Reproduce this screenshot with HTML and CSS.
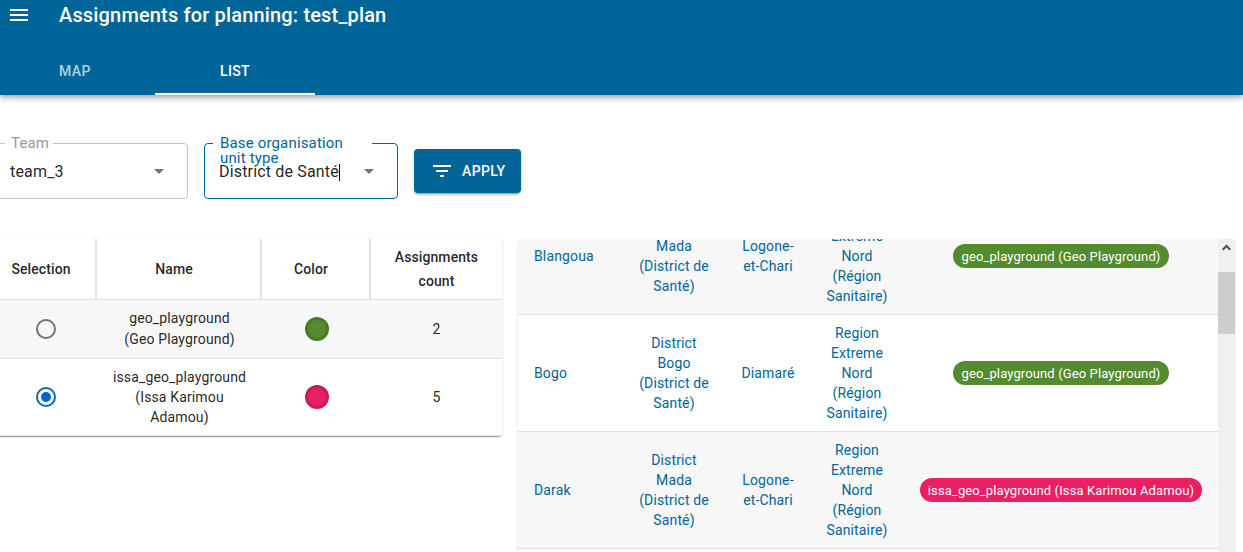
FILE: index.html
```html
<!DOCTYPE html>
<html lang="en">
<head>
<meta charset="utf-8">
<title>Assignments for planning: test_plan</title>
<link rel="stylesheet" href="styles.css">
</head>
<body>
<header class="app-bar">
  <div class="toolbar">
    <svg class="menu-icon" viewBox="0 0 24 24"><path d="M3 18h18v-2H3v2zm0-5h18v-2H3v2zm0-7v2h18V6H3z"/></svg>
    <h1 class="title">Assignments for planning: test_plan</h1>
  </div>
  <nav class="tabs">
    <div class="tab">MAP</div>
    <div class="tab tab-active">LIST</div>
  </nav>
</header>
<main class="content">
  <section class="filters">
    <div class="field field-team">
      <fieldset class="outline"><legend class="notch"></legend></fieldset>
      <span class="label">Team</span>
      <span class="value">team_3</span>
      <svg class="arrow" viewBox="0 0 24 24"><path d="M7 10l5 5 5-5z"/></svg>
    </div>
    <div class="field field-type">
      <fieldset class="outline"><legend class="notch"></legend></fieldset>
      <span class="label">Base organisation<br>unit type</span>
      <span class="value">District de Santé<i class="caret"></i></span>
      <svg class="arrow" viewBox="0 0 24 24"><path d="M7 10l5 5 5-5z"/></svg>
    </div>
    <button class="apply"><svg class="filter-icon" viewBox="0 0 24 24"><path d="M10 18h4v-2h-4v2zM3 6v2h18V6H3zm3 7h12v-2H6v2z"/></svg><span>APPLY</span></button>
  </section>
  <section class="panels">
    <div class="paper teams">
      <div class="team-row team-head">
        <div>Selection</div><div>Name</div><div>Color</div><div>Assignments<br>count</div>
      </div>
      <div class="team-row team-first">
        <div><span class="radio"></span></div>
        <div>geo_playground<br>(Geo Playground)</div>
        <div><span class="dot green"></span></div>
        <div>2</div>
      </div>
      <div class="team-row team-second">
        <div><span class="radio radio-on"></span></div>
        <div>issa_geo_playground<br>(Issa Karimou<br>Adamou)</div>
        <div><span class="dot pink"></span></div>
        <div>5</div>
      </div>
    </div>
    <div class="paper units">
      <div class="unit-list">
        <div class="unit-row">
          <div>Blangoua</div>
          <div>District<br>Mada<br>(District de<br>Santé)</div>
          <div>Logone-<br>et-Chari</div>
          <div>Region<br>Extreme<br>Nord<br>(Région<br>Sanitaire)</div>
          <div><span class="chip green">geo_playground (Geo Playground)</span></div>
        </div>
        <div class="unit-row">
          <div>Bogo</div>
          <div>District<br>Bogo<br>(District de<br>Santé)</div>
          <div>Diamaré</div>
          <div>Region<br>Extreme<br>Nord<br>(Région<br>Sanitaire)</div>
          <div><span class="chip green">geo_playground (Geo Playground)</span></div>
        </div>
        <div class="unit-row">
          <div>Darak</div>
          <div>District<br>Mada<br>(District de<br>Santé)</div>
          <div>Logone-<br>et-Chari</div>
          <div>Region<br>Extreme<br>Nord<br>(Région<br>Sanitaire)</div>
          <div><span class="chip pink">issa_geo_playground (Issa Karimou Adamou)</span></div>
        </div>
      </div>
      <div class="scrollbar">
        <svg class="scroll-up" viewBox="0 0 17 17"><path d="M4.7 10.7L8.5 6.9l3.8 3.8" fill="none" stroke="#505050" stroke-width="2.1"/></svg>
        <div class="thumb"></div>
      </div>
    </div>
  </section>
</main>
</body>
</html>
```
FILE: styles.css
```css
* { box-sizing: border-box; }
body {
  margin: 0;
  height: 552px;
  overflow: hidden;
  display: flex;
  flex-direction: column;
  background: #fff;
  color: rgba(0, 0, 0, .87);
  font-family: Roboto, "Liberation Sans", sans-serif;
  font-size: 14px;
  line-height: 20px;
  letter-spacing: .14px;
}

.app-bar {
  height: 95px;
  flex: none;
  background: #006699;
  color: #fff;
  box-shadow: 0 2px 4px -1px rgba(0,0,0,.2), 0 4px 5px 0 rgba(0,0,0,.14), 0 1px 10px 0 rgba(0,0,0,.12);
}
.toolbar {
  height: 47px;
  padding-left: 7px;
  display: flex;
  align-items: flex-start;
  gap: 28px;
}
.menu-icon { width: 24px; height: 24px; margin-top: 3px; fill: #fff; }
.title { margin: 0; font-size: 20px; font-weight: 500; line-height: 30px; letter-spacing: .16px; }
.tabs { display: flex; height: 48px; margin-left: -5px; }
.tab {
  width: 160px;
  text-align: center;
  font-weight: 500;
  line-height: 48px;
  letter-spacing: .4px;
  color: rgba(255, 255, 255, .7);
}
.tab-active { color: #fff; border-bottom: 2px solid #fff; }

.content { padding-top: 48px; }
.filters { display: flex; align-items: center; gap: 16px; margin-left: -4px; height: 56px; }
.field {
  position: relative;
  height: 56px;
  padding: 0 17px 0 14px;
  display: flex;
  align-items: center;
  justify-content: space-between;
  font-size: 16px;
}
.field-team { width: 192px; color: rgba(0, 0, 0, .87); }
.field-type { width: 194px; padding-left: 15px; }
.outline {
  position: absolute;
  inset: 0;
  margin: 0;
  padding: 0 0 0 8px;
  border: 1px solid #c4c4c4;
  border-radius: 4px;
}
.field-type .outline { border-color: #006699; }
.notch { height: 1px; padding: 0; width: 48px; }
.field-type .notch { width: 159px; }
.label {
  position: absolute;
  left: 15px;
  top: -7px;
  font-size: 15px;
  line-height: 15px;
  letter-spacing: .16px;
  color: #999;
}
.field-type .label { left: 16px; color: #006699; }
.value { padding-top: 2px; letter-spacing: .17px; }
.caret { display: inline-block; width: 1px; height: 17px; background: #000; vertical-align: -4px; }
.arrow { width: 24px; height: 24px; fill: #757575; }
.apply {
  width: 107px;
  height: 44px;
  padding: 0 16px;
  border: 0;
  border-radius: 4px;
  display: flex;
  align-items: center;
  gap: 8px;
  background: #006699;
  color: #fff;
  font: 500 14px/24px Roboto, sans-serif;
  letter-spacing: .4px;
  box-shadow: 0 3px 1px -2px rgba(0,0,0,.2), 0 2px 2px 0 rgba(0,0,0,.14), 0 1px 5px 0 rgba(0,0,0,.12);
}
.filter-icon { width: 24px; height: 24px; fill: #fff; flex: none; }

.panels { display: flex; gap: 16px; align-items: flex-start; margin: 40px 0 0 -4px; }
.paper {
  border-radius: 4px;
  overflow: hidden;
  background: #fff;
  box-shadow: 0 2px 1px -1px rgba(0,0,0,.2), 0 1px 1px 0 rgba(0,0,0,.14), 0 1px 3px 0 rgba(0,0,0,.12);
}
.teams { width: 506px; height: 197px; }
.team-row {
  display: grid;
  grid-template-columns: 101px 165px 109px 131px;
  border-bottom: 1px solid #e0e0e0;
  text-align: center;
}
.team-row > div { display: flex; align-items: center; justify-content: center; }
.team-row > div:first-child { padding-right: 1px; }
.team-head { height: 61px; font-weight: 500; line-height: 24px; letter-spacing: .09px; }
.team-head > div, .team-head > div:first-child { border-right: 2px solid #e0e0e0; padding-right: 9px; }
.team-head > div:last-child { border: 0; padding: 0; }
.team-first { height: 59px; line-height: 21px; background: #f7f7f7; }
.team-second { height: 77px; }
.radio { width: 20px; height: 20px; border: 2px solid #737373; border-radius: 50%; }
.radio-on { border-color: #0066cc; padding: 3px; background: #0066cc content-box; }
.dot { width: 24px; height: 24px; border: 3px solid rgba(0, 0, 0, .12); border-radius: 50%; }
.green { background-color: #558b2f; }
.pink { background-color: #e91e63; }

.units { width: 717px; height: 340px; display: flex; }
.unit-list { width: 700px; margin-top: -41px; }
.unit-row {
  height: 117px;
  display: grid;
  grid-template-columns: 104px 104px 84px 94px 314px;
  align-items: center;
  text-align: center;
  color: #006699;
  border-bottom: 1px solid #e0e0e0;
}
.unit-row:nth-child(odd) { background: #f7f7f7; }
.unit-row > div:first-child { text-align: left; padding-left: 16px; }
.unit-row > div:last-child { display: flex; justify-content: center; }
.chip { height: 24px; padding: 0 8px; border-radius: 12px; color: #fff; font-size: 13px; line-height: 25px; letter-spacing: .12px; white-space: nowrap; }
.scrollbar { width: 17px; background: #f0f0f0; }
.scroll-up { display: block; width: 17px; height: 17px; }
.thumb { height: 62px; margin-top: 16px; background: #cdcdcd; }
```
